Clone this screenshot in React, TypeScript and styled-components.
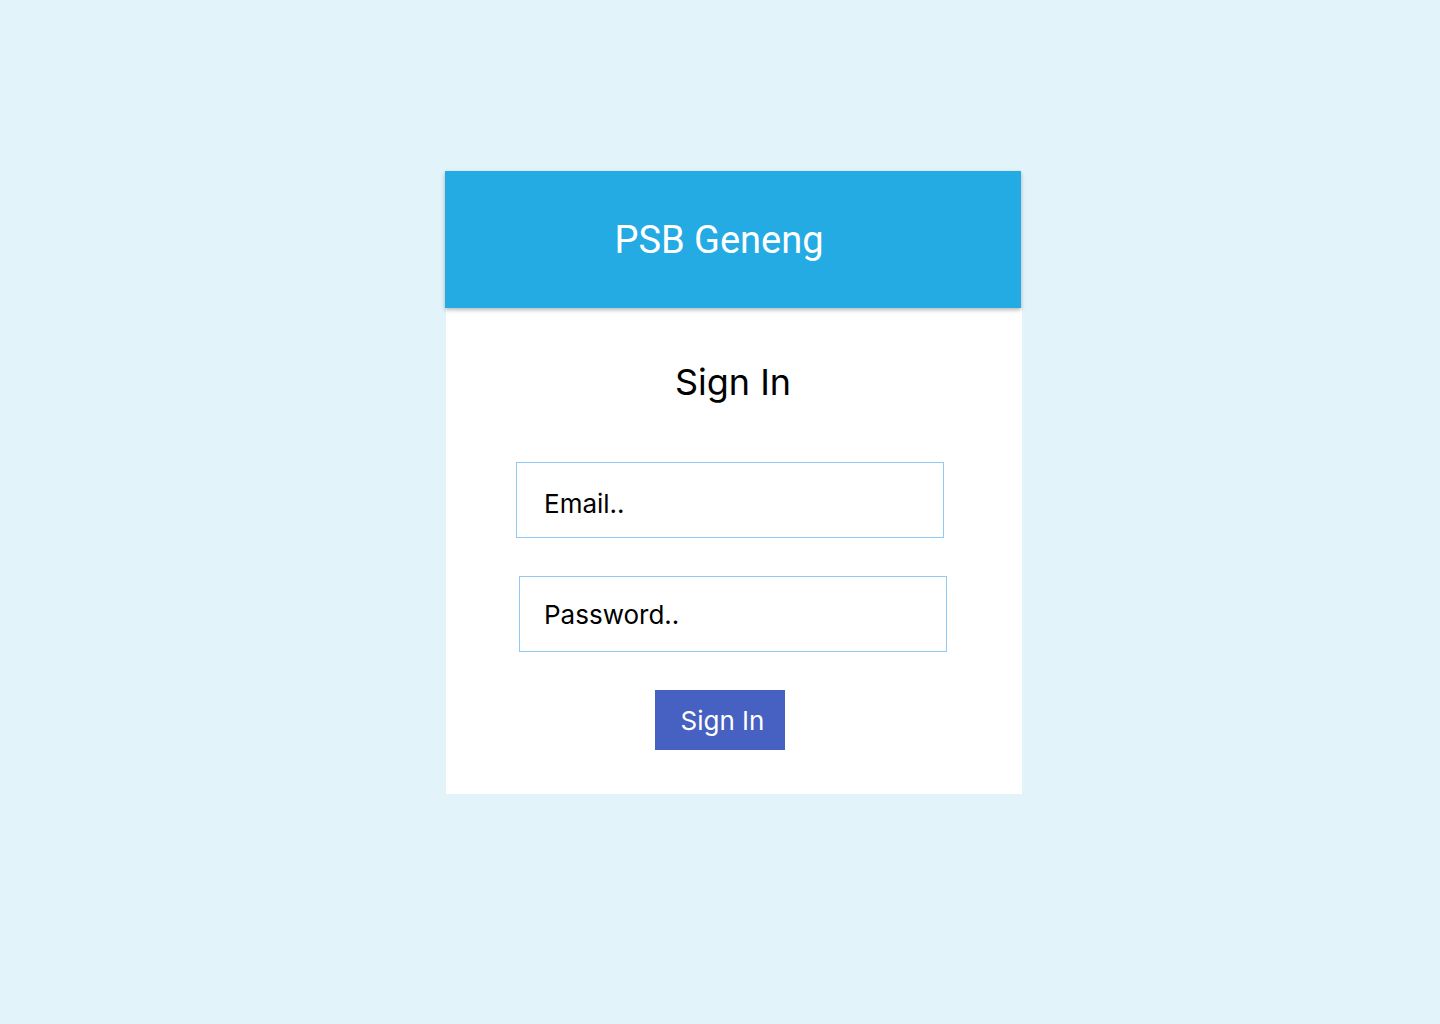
import React from "react";
import styled, { createGlobalStyle } from "styled-components";

const GlobalStyle = createGlobalStyle`
  html, body {
    margin: 0;
    padding: 0;
    background: #e2f4f9;
  }
  body {
    font-family: "Inter", "Noto Sans", sans-serif;
    min-height: 1024px;
  }
`;

const Page = styled.div`
  min-height: 1024px;
  padding: 171px 0 0 445px;
  box-sizing: border-box;
  background: #e2f4f9;
`;

const Card = styled.div`
  width: 577px;
  display: flex;
  flex-direction: column;
`;

const Header = styled.header`
  position: relative;
  z-index: 1;
  width: 576px;
  height: 137px;
  background: #25abe3;
  box-shadow: 0 2px 4px rgba(0, 0, 0, 0.28);
  display: flex;
  align-items: center;
  justify-content: center;
  padding-right: 28px;
  box-sizing: border-box;
`;

const Brand = styled.h1`
  margin: 0;
  font-family: "Roboto", "Liberation Sans", sans-serif;
  font-weight: 400;
  font-size: 38px;
  color: #ffffff;
`;

const Body = styled.main`
  width: 576px;
  margin-left: 1px;
  background: #ffffff;
  padding: 52px 0 44px;
  box-sizing: border-box;
  display: flex;
  flex-direction: column;
  align-items: center;
`;

const Title = styled.h2`
  margin: 0 2px 58px 0;
  font-family: "Inter", sans-serif;
  font-weight: 400;
  font-size: 36px;
  color: #000000;
`;

const Form = styled.form`
  display: flex;
  flex-direction: column;
  align-items: center;
  gap: 38px;
  width: 100%;
`;

const Field = styled.input<{ $shiftRight: number; $padLeft: number; $padTop: number }>`
  width: 428px;
  height: 76px;
  box-sizing: border-box;
  margin-right: ${(p) => p.$shiftRight}px;
  padding: ${(p) => p.$padTop}px 12px 0 ${(p) => p.$padLeft}px;
  border: 1px solid #90cbf5;
  border-radius: 0;
  outline: none;
  background: #ffffff;
  font-family: "Inter", sans-serif;
  font-size: 26px;
  color: #000000;
  &::placeholder {
    color: #000000;
    opacity: 1;
  }
`;

const Submit = styled.button`
  width: 130px;
  height: 60px;
  margin-right: 28px;
  border: none;
  border-radius: 0;
  background: #4661c2;
  color: #ffffff;
  font-family: "Inter", sans-serif;
  font-size: 26px;
  font-weight: 400;
  padding: 0 0 0 5px;
  cursor: pointer;
`;

export default function App() {
  return (
    <>
      <GlobalStyle />
      <Page>
        <Card>
          <Header>
            <Brand>PSB Geneng</Brand>
          </Header>
          <Body>
            <Title>Sign In</Title>
            <Form onSubmit={(e) => e.preventDefault()}>
              <Field type="email" placeholder="Email.." $shiftRight={8} $padLeft={27} $padTop={6} />
              <Field type="password" placeholder="Password.." $shiftRight={2} $padLeft={24} $padTop={0} />
              <Submit type="submit">Sign In</Submit>
            </Form>
          </Body>
        </Card>
      </Page>
    </>
  );
}
